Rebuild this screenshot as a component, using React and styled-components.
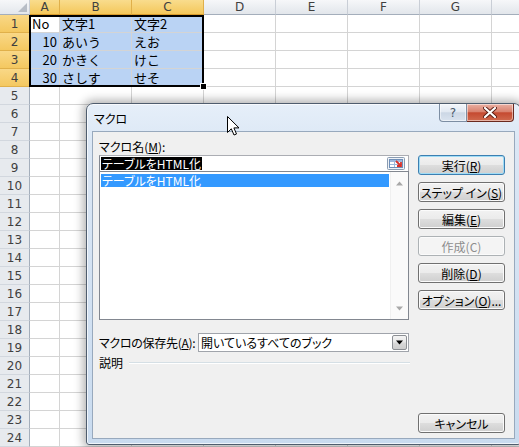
import React from "react"
import styled, { createGlobalStyle } from "styled-components"

const GlobalStyle = createGlobalStyle`
  html, body {
    margin: 0;
    padding: 0;
    background: #ffffff;
    overflow: hidden;
  }
`

const UI_FONT = `"Noto Sans CJK JP", "Noto Sans", sans-serif`

// the last column runs off the right edge, so its letter is not shown
const COLS = [
  { key: "A", width: 30 },
  { key: "B", width: 72 },
  { key: "C", width: 72 },
  { key: "D", width: 72 },
  { key: "E", width: 72 },
  { key: "F", width: 72 },
  { key: "G", width: 72 },
  { key: "H", width: 72, hidden: true },
]

const DATA = {
  1: ["No", "文字1", "文字2"],
  2: [10, "あいう", "えお"],
  3: [20, "かきく", "けこ"],
  4: [30, "さしす", "せそ"],
}

const SELECTED_COLS = ["A", "B", "C"]

const Screen = styled.div`
  position: relative;
  width: 519px;
  height: 447px;
  overflow: hidden;
  background: #ffffff;
`

const Sheet = styled.div`
  display: flex;
  flex-direction: column;
`

const Row = styled.div`
  display: flex;
  height: ${({ $h }) => $h}px;
`

const Corner = styled.div`
  position: relative;
  width: 30px;
  flex: none;
  box-sizing: border-box;
  background: linear-gradient(#f6f7f9, #e3e7ec);
  border-right: 1px solid #c9ced6;
  border-bottom: 1px solid #a4aebb;
  svg {
    position: absolute;
    right: 2px;
    bottom: 2px;
  }
`

const ColHead = styled.div`
  width: ${({ $w }) => $w}px;
  flex: none;
  box-sizing: border-box;
  display: flex;
  align-items: center;
  justify-content: center;
  font: 12px "DejaVu Sans", sans-serif;
  color: #3f3f3f;
  background: ${({ $sel }) =>
    $sel ? "linear-gradient(#f9dc8d, #f4c75b)" : "linear-gradient(#f6f7f9, #e2e6eb)"};
  border-right: 1px solid ${({ $sel }) => ($sel ? "#e0b04a" : "#c9ced6")};
  border-bottom: 1px solid ${({ $sel }) => ($sel ? "#d99b2b" : "#a4aebb")};
`

const RowHead = styled.div`
  width: 30px;
  flex: none;
  box-sizing: border-box;
  display: flex;
  align-items: center;
  justify-content: center;
  font: 12px "DejaVu Sans", sans-serif;
  color: #3f3f3f;
  background: ${({ $sel }) => ($sel ? "linear-gradient(#f9d887, #f4c860)" : "#e7eaee")};
  border-right: 1px solid ${({ $sel }) => ($sel ? "#d99b2b" : "#a4aebb")};
  border-bottom: 1px solid ${({ $sel }) => ($sel ? "#e0b04a" : "#d2d7de")};
`

const Cell = styled.div`
  width: ${({ $w }) => $w}px;
  flex: none;
  box-sizing: border-box;
  display: flex;
  align-items: center;
  justify-content: ${({ $num }) => ($num ? "flex-end" : "flex-start")};
  padding: 0 2px;
  font: 13px ${UI_FONT};
  color: #000;
  white-space: nowrap;
  background: ${({ $sel }) => ($sel ? "#bad3f4" : "#ffffff")};
  border-right: 1px solid #d4d4d4;
  border-bottom: 1px solid #d4d4d4;
`

const Selection = styled.div`
  position: absolute;
  left: 29px;
  top: 15px;
  width: 175px;
  height: 72px;
  box-sizing: border-box;
  border: 2px solid #000;
  pointer-events: none;
  &::after {
    content: "";
    position: absolute;
    right: -5px;
    bottom: -5px;
    width: 5px;
    height: 5px;
    background: #000;
    border: 1px solid #fff;
  }
`

/* dialog window */

const Window = styled.div`
  position: absolute;
  left: 86px;
  top: 103px;
  width: 435px;
  height: 342px;
  box-sizing: border-box;
  display: flex;
  flex-direction: column;
  border: 1px solid #4f5d6e;
  border-radius: 7px 7px 3px 3px;
  background: linear-gradient(#e6eff9 0px, #dbe7f5 40px, #d2e1f2 200px, #c9dbef 100%);
  box-shadow: 0 0 10px 3px rgba(0, 0, 0, 0.3), inset 0 0 0 1px rgba(255, 255, 255, 0.7);
  font-family: ${UI_FONT};
  font-feature-settings: "palt";
`

const TitleBar = styled.div`
  height: 27px;
  display: flex;
  justify-content: space-between;
  align-items: flex-start;
  padding: 0 6px 0 7px;
`

const Title = styled.div`
  margin-top: 6px;
  font-size: 12px;
  color: #000;
`

const Caption = styled.div`
  display: flex;
`

const CaptionButton = styled.div`
  width: ${({ $w }) => $w}px;
  height: 18px;
  box-sizing: border-box;
  display: flex;
  align-items: center;
  justify-content: center;
  border: 1px solid ${({ $close }) => ($close ? "#6a2a20" : "#7d8ea3")};
  border-top: none;
  border-left: ${({ $close }) => ($close ? "none" : undefined)};
  border-radius: ${({ $close }) => ($close ? "0 0 4px 0" : "0 0 0 4px")};
  background: ${({ $close }) =>
    $close
      ? "linear-gradient(#eab0a3 0%, #d9826f 45%, #c54a31 52%, #d06a4e 100%)"
      : "linear-gradient(#f4f7fb 0%, #e2e9f2 45%, #ccd7e5 52%, #dae3ef 100%)"};
  box-shadow: inset 0 0 0 1px rgba(255, 255, 255, 0.5);
  font: 12px "DejaVu Sans", sans-serif;
  color: #4a5868;
`

const Content = styled.div`
  margin: 0 5px;
  height: 308px;
  box-sizing: border-box;
  display: flex;
  flex-direction: column;
  padding: 7px 9px 5px 6px;
  background: #f0f0f0;
  border: 1px solid #98a9bd;
  font-size: 12px;
  color: #000;
`

const Main = styled.div`
  display: flex;
  gap: 9px;
`

const LeftCol = styled.div`
  width: 311px;
  display: flex;
  flex-direction: column;
`

const Label = styled.div`
  height: 16px;
  line-height: 16px;
  white-space: nowrap;
  font-size: 12px;
`

const NameBox = styled.div`
  height: 16px;
  box-sizing: border-box;
  display: flex;
  align-items: center;
  justify-content: space-between;
  padding: 0 3px 0 1px;
  background: #fff;
  border: 1px solid #abadb3;
  border-left-color: #828790;
  border-bottom: none;
`

const SelectedText = styled.span`
  background: #000;
  color: #fff;
  font-size: 12px;
  line-height: 13px;
  padding: 0 1px;
`

const ListBox = styled.div`
  height: 149px;
  box-sizing: border-box;
  display: flex;
  background: #fff;
  border: 1px solid #828790;
`

const ListItems = styled.div`
  flex: 1;
  padding: 2px 1px;
`

const ListItem = styled.div`
  height: 13px;
  line-height: 13px;
  padding: 0 1px;
  font-size: 12px;
  background: ${({ $active }) => ($active ? "#3399ff" : "transparent")};
  color: ${({ $active }) => ($active ? "#fff" : "#000")};
`

const ScrollBar = styled.div`
  width: 17px;
  display: flex;
  flex-direction: column;
  justify-content: space-between;
  align-items: center;
  padding: 9px 0 8px;
  background: #fafafa;
  border-left: 1px solid #f0f0f0;
`

const ButtonCol = styled.div`
  margin-top: 16px;
  display: flex;
  flex-direction: column;
  gap: 7px;
`

const Button = styled.div`
  width: 87px;
  height: 20px;
  box-sizing: border-box;
  display: flex;
  align-items: center;
  justify-content: center;
  border-radius: 3px;
  border: 1px solid ${({ $default, $disabled }) =>
    $default ? "#3c7fb1" : $disabled ? "#adb2b5" : "#707070"};
  background: ${({ $disabled }) =>
    $disabled
      ? "#f4f4f4"
      : "linear-gradient(#f2f2f2 0%, #ebebeb 48%, #dddddd 52%, #cfcfcf 100%)"};
  box-shadow: inset 0 0 0 1px ${({ $default }) => ($default ? "#9fdcf6" : "#fbfbfb")};
  font-size: 12px;
  color: ${({ $disabled }) => ($disabled ? "#8d8d8d" : "#000")};
  white-space: nowrap;
  u {
    text-underline-offset: 1px;
  }
`

const SaveRow = styled.div`
  margin-top: 13px;
  display: flex;
  align-items: center;
`

const SaveLabel = styled(Label)`
  width: 99px;
  letter-spacing: -0.3px;
`

const Combo = styled.div`
  width: 211px;
  height: 19px;
  box-sizing: border-box;
  display: flex;
  align-items: center;
  justify-content: space-between;
  padding: 0 1px 0 2px;
  background: #fff;
  border: 1px solid #a0a4ab;
`

const ComboButton = styled.div`
  width: 15px;
  height: 15px;
  box-sizing: border-box;
  display: flex;
  align-items: center;
  justify-content: center;
  border: 1px solid #8c8f94;
  border-radius: 2px;
  background: linear-gradient(#f4f4f4 0%, #e7e7e7 48%, #d9d9d9 52%, #cdcdcd 100%);
`

const DescRow = styled.div`
  width: 311px;
  margin-top: 3px;
  display: flex;
  align-items: center;
  gap: 6px;
`

const Rule = styled.div`
  flex: 1;
  height: 1px;
  background: #d5dfe5;
  border-bottom: 1px solid #ffffff;
`

const Footer = styled.div`
  margin-top: auto;
  display: flex;
  justify-content: flex-end;
`

const Cursor = styled.svg`
  position: absolute;
  left: 227px;
  top: 116px;
`

const RefEditIcon = () => (
  <svg width="18" height="13" viewBox="0 0 18 13">
    <rect x="0.5" y="0.5" width="17" height="12" rx="1" fill="#eef2f7" stroke="#8a9cb2" />
    <rect x="2.5" y="2.5" width="13" height="8" fill="#ffffff" stroke="#6f8fb8" />
    <rect x="3" y="3" width="12" height="2" fill="#9db8dc" />
    <line x1="3" y1="7.5" x2="15" y2="7.5" stroke="#9db8dc" />
    <line x1="7.5" y1="3" x2="7.5" y2="10" stroke="#9db8dc" />
    <path d="M9 4 L14 9 M10 9 L14 9 L14 5" stroke="#d8322b" strokeWidth="1.8" fill="none" />
  </svg>
)

const Triangle = ({ up, color = "#9a9a9a", size = 7 }) => (
  <svg width={size} height={Math.ceil(size / 2) + 1} viewBox="0 0 7 4">
    <path d={up ? "M0 4 L3.5 0 L7 4 Z" : "M0 0 L7 0 L3.5 4 Z"} fill={color} />
  </svg>
)

const cellValue = (row, colIndex) => {
  const r = DATA[row]
  if (!r || colIndex > 2) return null
  return r[colIndex]
}

const App = () => {
  const rows = Array.from({ length: 24 }, (_, i) => i + 1)

  return (
    <Screen>
      <GlobalStyle />
      <Sheet>
        <Row $h={15}>
          <Corner>
            <svg width="9" height="9" viewBox="0 0 9 9">
              <path d="M9 0 L9 9 L0 9 Z" fill="#b7bdc6" />
            </svg>
          </Corner>
          {COLS.map((c) => (
            <ColHead key={c.key} $w={c.width} $sel={SELECTED_COLS.includes(c.key)}>
              {c.hidden ? null : c.key}
            </ColHead>
          ))}
        </Row>
        {rows.map((r) => (
          <Row key={r} $h={18}>
            <RowHead $sel={r <= 4}>{r}</RowHead>
            {COLS.map((c, ci) => {
              const v = cellValue(r, ci)
              const inSel = r <= 4 && ci <= 2 && !(r === 1 && ci === 0)
              return (
                <Cell key={c.key} $w={c.width} $sel={inSel} $num={typeof v === "number"}>
                  {v}
                </Cell>
              )
            })}
          </Row>
        ))}
      </Sheet>
      <Selection />

      <Window>
        <TitleBar>
          <Title>マクロ</Title>
          <Caption>
            <CaptionButton $w={28}>?</CaptionButton>
            <CaptionButton $w={47} $close>
              <svg width="14" height="11" viewBox="0 0 14 11">
                <path
                  d="M2 1 L12 10 M12 1 L2 10"
                  stroke="#5a1d14"
                  strokeWidth="4"
                  strokeLinecap="round"
                />
                <path
                  d="M2 1 L12 10 M12 1 L2 10"
                  stroke="#ffffff"
                  strokeWidth="2.2"
                  strokeLinecap="round"
                />
              </svg>
            </CaptionButton>
          </Caption>
        </TitleBar>

        <Content>
          <Main>
            <LeftCol>
              <Label>
                マクロ名(<u>M</u>):
              </Label>
              <NameBox>
                <SelectedText>テーブルをHTML化</SelectedText>
                <RefEditIcon />
              </NameBox>
              <ListBox>
                <ListItems>
                  <ListItem $active>テーブルをHTML化</ListItem>
                </ListItems>
                <ScrollBar>
                  <Triangle up color="#a8a8a8" />
                  <Triangle color="#a8a8a8" />
                </ScrollBar>
              </ListBox>
            </LeftCol>
            <ButtonCol>
              <Button $default>
                実行(<u>R</u>)
              </Button>
              <Button>
                ステップ イン(<u>S</u>)
              </Button>
              <Button>
                編集(<u>E</u>)
              </Button>
              <Button $disabled>作成(C)</Button>
              <Button>
                削除(<u>D</u>)
              </Button>
              <Button>
                オプション(<u>O</u>)...
              </Button>
            </ButtonCol>
          </Main>

          <SaveRow>
            <SaveLabel>
              マクロの保存先(<u>A</u>):
            </SaveLabel>
            <Combo>
              <span>開いているすべてのブック</span>
              <ComboButton>
                <Triangle color="#000" />
              </ComboButton>
            </Combo>
          </SaveRow>

          <DescRow>
            <Label>説明</Label>
            <Rule />
          </DescRow>

          <Footer>
            <Button>キャンセル</Button>
          </Footer>
        </Content>
      </Window>

      <Cursor width="13" height="20" viewBox="0 0 13 20">
        <path
          d="M0.5 0.5 L0.5 16.5 L4.3 12.8 L7 19 L9.5 18 L6.9 11.9 L12 11.9 Z"
          fill="#ffffff"
          stroke="#000000"
          strokeWidth="1"
          strokeLinejoin="round"
        />
      </Cursor>
    </Screen>
  )
}

export default App
